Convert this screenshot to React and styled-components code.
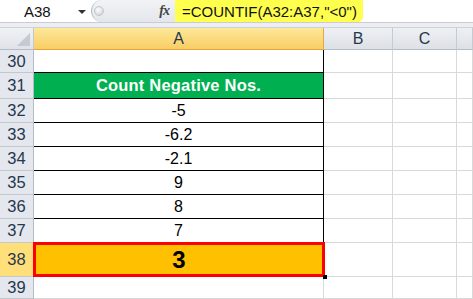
import React from "react";
import styled, { createGlobalStyle } from "styled-components";

const Global = createGlobalStyle`
  html, body { margin: 0; padding: 0; background: #fff; overflow: hidden; }
  body { font-family: "Liberation Sans", Arial, sans-serif; }
`;

const Page = styled.div`
  width: 473px;
  height: 299px;
  overflow: hidden;
  display: flex;
  flex-direction: column;
  background: #fff;
`;

const FormulaBar = styled.div`
  height: 23px;
  display: flex;
  align-items: stretch;
  border-bottom: 1px solid #c9cdd3;
  box-sizing: border-box;
`;

const NameBox = styled.div`
  width: 91px;
  display: flex;
  align-items: center;
  background: #fff;
  position: relative;
  font-size: 15px;
  color: #111;
  padding-left: 24px;
  box-sizing: border-box;
`;

const Arrow = styled.span`
  position: absolute;
  left: 78px;
  top: 10px;
  width: 0;
  height: 0;
  border-left: 4px solid transparent;
  border-right: 4px solid transparent;
  border-top: 4px solid #333;
`;

const Middle = styled.div`
  width: 84px;
  display: flex;
  align-items: center;
  justify-content: space-between;
  background: linear-gradient(#f1f3f6, #e3e6eb);
  border-left: 1px solid #b9bec6;
  border-top-left-radius: 11px;
  border-bottom-left-radius: 11px;
  box-sizing: border-box;
  padding: 0 6px 0 2px;
`;

const Grip = styled.span`
  width: 8px;
  height: 8px;
  border-radius: 50%;
  background: radial-gradient(circle at 40% 35%, #fdfdfd, #c7ccd3);
  border: 1px solid #c2c6cc;
`;

const Fx = styled.span`
  font-family: "Liberation Serif", "Times New Roman", serif;
  font-style: italic;
  font-weight: bold;
  font-size: 14px;
  color: #444;
  letter-spacing: -1px;
`;

const FormulaInput = styled.div`
  flex: 1;
  display: flex;
  align-items: stretch;
  background: #fff;
  min-width: 0;
`;

const Highlight = styled.span`
  display: flex;
  align-items: center;
  flex: none;
  white-space: nowrap;
  background: #ffff4d;
  padding: 0 6px 0 7px;
  border-radius: 0 0 5px 0;
  font-size: 15px;
  color: #111;
`;

const Band = styled.div`
  height: 4px;
  background: #eceef1;
  border-bottom: 1px solid #cdd1d7;
`;

const Grid = styled.div`
  flex: 1;
  display: grid;
  grid-template-columns: 34px 290px 69px 64px 1fr;
  grid-template-rows: 22px 23px 26px 24px 24px 24px 24px 24px 24px 34px 1fr;
`;

const Corner = styled.div`
  background: linear-gradient(#f0f2f5, #dfe3e9);
  border-right: 1px solid #c3c8cf;
  border-bottom: 1px solid #b6bcc5;
  position: relative;
  &::after {
    content: "";
    position: absolute;
    right: 3px;
    bottom: 3px;
    width: 0;
    height: 0;
    border-left: 13px solid transparent;
    border-bottom: 13px solid #c5cad2;
  }
`;

const ColHead = styled.div`
  display: flex;
  align-items: center;
  justify-content: center;
  font-size: 16px;
  color: #27374d;
  border-right: 1px solid ${(p) => (p.$active ? "#e3a945" : "#c6cbd2")};
  border-bottom: 1px solid ${(p) => (p.$active ? "#e8a33a" : "#b6bcc5")};
  background: ${(p) =>
    p.$active
      ? "linear-gradient(#fde89a, #f9cd63)"
      : "linear-gradient(#eef0f3, #dde1e7)"};
`;

const RowHead = styled.div`
  display: flex;
  align-items: center;
  justify-content: center;
  font-size: 16.5px;
  color: #27374d;
  border-right: 1px solid ${(p) => (p.$active ? "#e3a945" : "#b6bcc5")};
  border-bottom: 1px solid #c3c8cf;
  background: ${(p) => (p.$active ? "#ffdf7a" : "#e4e8ee")};
`;

const Cell = styled.div`
  box-sizing: border-box;
  display: flex;
  align-items: center;
  justify-content: center;
  border-right: 1px solid #d9d9d9;
  border-bottom: 1px solid #d9d9d9;
  background: #fff;
`;

const DataCell = styled(Cell)`
  border-right: 1px solid #000;
  border-bottom: 1px solid #000;
  font-size: 16px;
  color: #000;
`;

const TitleCell = styled(DataCell)`
  background: #00b050;
  color: #fff;
  font-weight: bold;
  font-size: 16.5px;
  letter-spacing: 0.2px;
`;

const TopCell = styled(Cell)`
  border-bottom: 1px solid #000;
  border-right-color: #000;
`;

const ResultCell = styled.div`
  box-sizing: border-box;
  margin: -1px -1px 0 -1px;
  display: flex;
  align-items: center;
  justify-content: center;
  background: #ffc000;
  border: 3px solid #ff0000;
  font-weight: bold;
  font-size: 24px;
  color: #000;
  position: relative;
  &::after {
    content: "";
    position: absolute;
    right: -5px;
    bottom: -5px;
    width: 4px;
    height: 4px;
    background: #000;
  }
`;

const rows = [
  { n: 32, v: "-5" },
  { n: 33, v: "-6.2" },
  { n: 34, v: "-2.1" },
  { n: 35, v: "9" },
  { n: 36, v: "8" },
  { n: 37, v: "7" },
];

export default function App() {
  return (
    <Page>
      <Global />
      <FormulaBar>
        <NameBox>
          A38
          <Arrow />
        </NameBox>
        <Middle>
          <Grip />
          <Fx>fx</Fx>
        </Middle>
        <FormulaInput>
          <Highlight>=COUNTIF(A32:A37,"&lt;0")</Highlight>
        </FormulaInput>
      </FormulaBar>
      <Band />
      <Grid>
        <Corner />
        <ColHead $active>A</ColHead>
        <ColHead>B</ColHead>
        <ColHead>C</ColHead>
        <ColHead />

        <RowHead>30</RowHead>
        <TopCell />
        <Cell />
        <Cell />
        <Cell />

        <RowHead>31</RowHead>
        <TitleCell>Count Negative Nos.</TitleCell>
        <Cell />
        <Cell />
        <Cell />

        {rows.map((r) => (
          <React.Fragment key={r.n}>
            <RowHead>{r.n}</RowHead>
            <DataCell>{r.v}</DataCell>
            <Cell />
            <Cell />
            <Cell />
          </React.Fragment>
        ))}

        <RowHead $active>38</RowHead>
        <ResultCell>3</ResultCell>
        <Cell />
        <Cell />
        <Cell />

        <RowHead>39</RowHead>
        <Cell />
        <Cell />
        <Cell />
        <Cell />
      </Grid>
    </Page>
  );
}
